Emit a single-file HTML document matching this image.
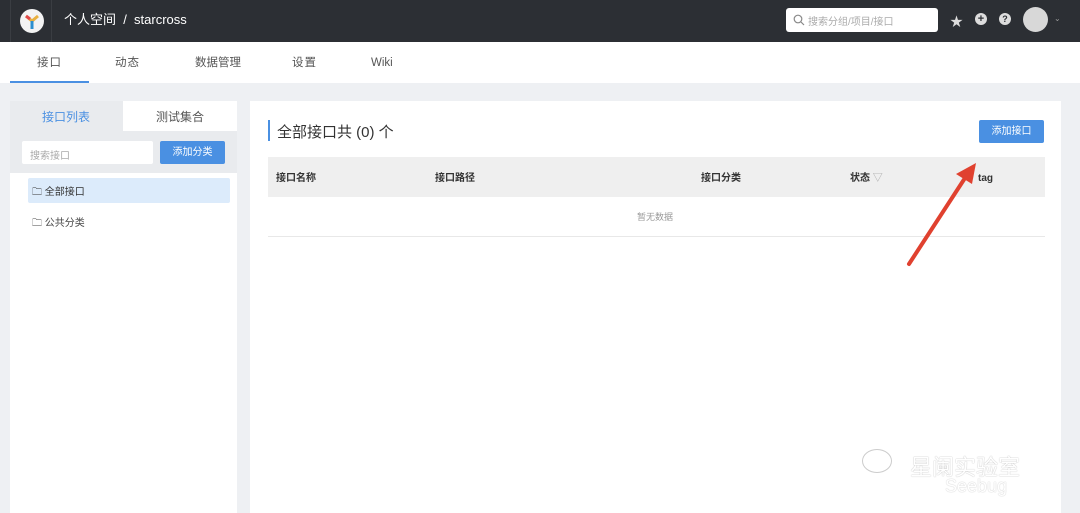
<!DOCTYPE html>
<html><head><meta charset="utf-8"><style>
*{margin:0;padding:0;box-sizing:border-box}
body{width:1080px;height:513px;overflow:hidden;background:#eef0f3;font-family:"Liberation Sans","Noto Sans CJK SC",sans-serif;position:relative;color:#333}
.abs{position:absolute}
.hdr{left:0;top:0;width:1080px;height:42px;background:#2c2f34}
.tabs{left:0;top:42px;width:1080px;height:41px;background:#fff}
.tab{top:55px;height:16px;line-height:16px;font-size:11.5px;color:#555;letter-spacing:1px}
.panel{background:#fff}
.th{font-size:10px;color:#333;top:172px;height:14px;line-height:14px;font-weight:bold}
</style></head><body>
<div class="abs hdr"></div>
<div class="abs" style="left:10px;top:0;width:42px;height:42px;border-left:1px solid #3a3d42;border-right:1px solid #3a3d42"></div>
<svg class="abs" style="left:19px;top:8px" width="26" height="26" viewBox="0 0 26 26"><circle cx="13" cy="13" r="12" fill="#f3f3f3"/><path d="M7 8 L13 13 L19 8" stroke="#e8b040" stroke-width="3" fill="none"/><path d="M13 13 L13 21" stroke="#2d8fcf" stroke-width="3"/><path d="M7 8 L11 11" stroke="#e0484a" stroke-width="3"/></svg>
<div class="abs" style="left:64px;top:11px;height:18px;line-height:18px;color:#fff;font-size:13px">个人空间 &nbsp;/&nbsp; starcross</div>
<div class="abs" style="left:786px;top:8px;width:152px;height:24px;background:#fff;border-radius:3px"></div>
<svg class="abs" style="left:793px;top:14px" width="12" height="12"><circle cx="5" cy="5" r="3.8" stroke="#888" fill="none" stroke-width="1.2"/><path d="M8 8 L11 11" stroke="#888" stroke-width="1.2"/></svg>
<div class="abs" style="left:808px;top:13px;font-size:10px;color:#aaa">搜索分组/项目/接口</div>
<div class="abs" style="left:950px;top:11px;color:#ddd;font-size:13px">★</div>
<div class="abs" style="left:975px;top:13px;width:12px;height:12px;border-radius:50%;background:#ddd;color:#2c2f34;font-size:11px;line-height:12px;text-align:center;font-weight:bold">+</div>
<div class="abs" style="left:999px;top:13px;width:12px;height:12px;border-radius:50%;background:#ddd;color:#2c2f34;font-size:9px;line-height:12px;text-align:center;font-weight:bold">?</div>
<div class="abs" style="left:1023px;top:7px;width:25px;height:25px;border-radius:50%;background:#d8d8d8"></div>
<div class="abs" style="left:1054px;top:14px;color:#999;font-size:8px">⌄</div>
<div class="abs tabs"></div>
<div class="abs tab" style="left:37px">接口</div>
<div class="abs tab" style="left:115px">动态</div>
<div class="abs tab" style="left:195px;letter-spacing:0">数据管理</div>
<div class="abs tab" style="left:292px">设置</div>
<div class="abs tab" style="left:371px;letter-spacing:0;top:55px">Wiki</div>
<div class="abs" style="left:10px;top:81px;width:79px;height:2px;background:#4a90e2"></div>
<div class="abs panel" style="left:10px;top:101px;width:227px;height:412px"></div>
<div class="abs" style="left:10px;top:101px;width:113px;height:30px;background:#e9ebee"></div>
<div class="abs" style="left:10px;top:131px;width:227px;height:42px;background:#e9ebee"></div>
<div class="abs" style="left:42px;top:108px;font-size:12px;color:#4a90e2">接口列表</div>
<div class="abs" style="left:156px;top:108px;font-size:12px;color:#555">测试集合</div>
<div class="abs" style="left:22px;top:141px;width:131px;height:23px;background:#fff;border-radius:2px"></div>
<div class="abs" style="left:30px;top:147px;font-size:10px;color:#aaa">搜索接口</div>
<div class="abs" style="left:160px;top:141px;width:65px;height:23px;background:#4a90e2;border-radius:2px;color:#fff;font-size:10px;line-height:23px;text-align:center">添加分类</div>
<div class="abs" style="left:28px;top:178px;width:202px;height:25px;background:#dcebfb;border-radius:2px"></div>
<div class="abs" style="left:32px;top:183px;font-size:10px;color:#333">🗀 全部接口</div>
<div class="abs" style="left:32px;top:214px;font-size:10px;color:#444">🗀 公共分类</div>
<div class="abs panel" style="left:250px;top:101px;width:811px;height:412px"></div>
<div class="abs" style="left:268px;top:120px;width:2px;height:21px;background:#4a90e2"></div>
<div class="abs" style="left:277px;top:121px;font-size:15px;color:#333">全部接口共 (0) 个</div>
<div class="abs" style="left:979px;top:120px;width:65px;height:23px;background:#4a90e2;border-radius:2px;color:#fff;font-size:10px;line-height:23px;text-align:center">添加接口</div>
<div class="abs" style="left:268px;top:157px;width:777px;height:40px;background:#efefef"></div>
<div class="abs th" style="left:276px">接口名称</div>
<div class="abs th" style="left:435px">接口路径</div>
<div class="abs th" style="left:701px">接口分类</div>
<div class="abs th" style="left:850px">状态 <span style="color:#aaa;font-weight:normal">▽</span></div>
<div class="abs th" style="left:978px">tag</div>
<div class="abs" style="left:637px;top:210px;font-size:9px;color:#999">暂无数据</div>
<div class="abs" style="left:268px;top:236px;width:777px;height:1px;background:#e8e8e8"></div>
<svg class="abs" style="left:0;top:0" width="1080" height="513"><path d="M909 264 L965 178" stroke="#e0412f" stroke-width="4" stroke-linecap="round"/><path d="M976 163 L956 174 L972 184 Z" fill="#e0412f"/></svg>
<div class="abs" style="left:910px;top:450px;font-size:22px;color:#fff;text-shadow:0 0 1px #999">星阑实验室</div>
<div class="abs" style="left:945px;top:476px;font-size:18px;color:#fff;text-shadow:0 0 1px #aaa">Seebug</div>
<div class="abs" style="left:862px;top:449px;width:30px;height:24px;border:1px solid #ccc;border-radius:50%"></div>
</body></html>
